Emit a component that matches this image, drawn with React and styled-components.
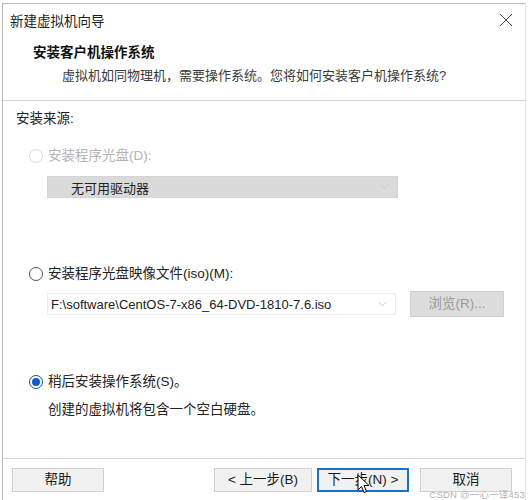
import React from "react";
import styled, { createGlobalStyle } from "styled-components";

const Global = createGlobalStyle`
  html, body { margin: 0; padding: 0; background: #ffffff; }
  body { width: 528px; height: 500px; overflow: hidden; font-family: "Liberation Sans", "Noto Sans CJK SC", sans-serif; }
  #root { height: 500px; }
`;

const Window = styled.div`
  position: relative;
  box-sizing: border-box;
  margin: 3px 2px 0 2px;
  height: 497px;
  border-top: 1px solid #b9b9b9;
  border-left: 1px solid #b9b9b9;
  border-right: 1px solid #e4e4e4;
  background: #fff;
  display: flex;
  flex-direction: column;
  color: #1a1a1a;
`;

const TitleBar = styled.div`
  height: 32px;
  display: flex;
  align-items: center;
  justify-content: space-between;
  padding: 0 12px 0 7px;
  font-size: 13.5px;
  color: #1c1c1c;
`;

const CloseIcon = styled.svg`
  width: 14px;
  height: 14px;
`;

const Header = styled.div`
  height: 65px;
  box-sizing: border-box;
  padding: 8px 0 0 30px;
  border-bottom: 1px solid #d5d5d5;
`;

const HeaderTitle = styled.div`
  font-size: 13.5px;
  font-weight: 700;
  line-height: 18px;
  color: #111;
`;

const HeaderSub = styled.div`
  margin: 5px 0 0 29px;
  font-size: 13px;
  line-height: 18px;
  color: #3a3a3a;
`;

const Body = styled.div`
  flex: 1;
  padding: 9px 0 0 13px;
  display: flex;
  flex-direction: column;
`;

const Label = styled.div`
  font-size: 13.5px;
  line-height: 18px;
  color: ${(p) => (p.$disabled ? "#b4b4b4" : "#222")};
  margin-top: ${(p) => p.$mt || 0}px;
  margin-left: ${(p) => p.$ml || 0}px;
`;

const RadioRow = styled.div`
  display: flex;
  align-items: center;
  gap: 5px;
  margin-top: ${(p) => p.$mt || 0}px;
  margin-left: 13px;
  font-size: 13.5px;
  line-height: 18px;
  color: ${(p) => (p.$disabled ? "#b4b4b4" : "#222")};
`;

const Radio = styled.span`
  box-sizing: border-box;
  width: 14px;
  height: 14px;
  border-radius: 50%;
  border: 1px solid ${(p) => (p.$disabled ? "#dedede" : p.$checked ? "#1d4f91" : "#555")};
  display: flex;
  align-items: center;
  justify-content: center;
  background: #fff;
  &::after {
    content: "";
    display: ${(p) => (p.$checked ? "block" : "none")};
    width: 8px;
    height: 8px;
    border-radius: 50%;
    background: #0a5fd0;
  }
`;

const FieldRow = styled.div`
  display: flex;
  align-items: center;
  gap: 14px;
  margin-top: ${(p) => p.$mt || 0}px;
  margin-left: 31px;
`;

const Select = styled.div`
  box-sizing: border-box;
  width: ${(p) => p.$w}px;
  height: 22px;
  display: flex;
  align-items: center;
  justify-content: space-between;
  padding: 0 8px 0 ${(p) => p.$pl || 3}px;
  font-size: 13px;
  background: ${(p) => (p.$disabled ? "#dadada" : "#fff")};
  border: 1px solid ${(p) => (p.$disabled ? "#d4d4d4" : "#ececec")};
  color: #222;
`;

const Chevron = styled.svg`
  width: 9px;
  height: 6px;
`;

const Button = styled.div`
  box-sizing: border-box;
  width: ${(p) => p.$w || 92}px;
  height: ${(p) => p.$h || 24}px;
  display: flex;
  align-items: center;
  justify-content: center;
  font-size: 13.5px;
  line-height: 14px;
  background: ${(p) => (p.$disabled ? "#dcdcdc" : "#f1f1f1")};
  border: ${(p) => (p.$focus ? "2px solid #1870c8" : "1px solid #cfcfcf")};
  color: ${(p) => (p.$disabled ? "#9a9a9a" : "#1a1a1a")};
  margin-left: ${(p) => p.$ml || 0}px;
`;

const Footer = styled.div`
  box-sizing: border-box;
  height: 42px;
  flex: none;
  border-top: 1px solid #d8d8d8;
  display: flex;
  align-items: flex-start;
  padding: 9px 0 0 9px;
`;

const Watermark = styled.div`
  position: absolute;
  right: 0px;
  bottom: 0px;
  font-size: 9.5px;
  line-height: 10px;
  color: rgba(150, 150, 150, 0.75);
  letter-spacing: 0.2px;
`;

const Cursor = styled.svg`
  position: absolute;
  left: 354px;
  top: 470px;
  width: 13px;
  height: 20px;
`;

const ChevronIcon = () => (
  <Chevron viewBox="0 0 9 6">
    <path d="M0.5 0.8 L4.5 4.8 L8.5 0.8" fill="none" stroke="#c8c8c8" strokeWidth="1" />
  </Chevron>
);

export default function App() {
  return (
    <>
      <Global />
      <Window>
        <TitleBar>
          <span>新建虚拟机向导</span>
          <CloseIcon viewBox="0 0 14 14">
            <path d="M1 1 L13 13 M13 1 L1 13" stroke="#444" strokeWidth="1" />
          </CloseIcon>
        </TitleBar>
        <Header>
          <HeaderTitle>安装客户机操作系统</HeaderTitle>
          <HeaderSub>虚拟机如同物理机，需要操作系统。您将如何安装客户机操作系统?</HeaderSub>
        </Header>
        <Body>
          <Label>安装来源:</Label>
          <RadioRow $disabled $mt={19}>
            <Radio $disabled />
            <span>安装程序光盘(D):</span>
          </RadioRow>
          <FieldRow $mt={11}>
            <Select $w={351} $pl={23} $disabled>
              <span>无可用驱动器</span>
              <ChevronIcon />
            </Select>
          </FieldRow>
          <RadioRow $mt={67}>
            <Radio />
            <span>安装程序光盘映像文件(iso)(M):</span>
          </RadioRow>
          <FieldRow $mt={8}>
            <Select $w={349}>
              <span>F:\software\CentOS-7-x86_64-DVD-1810-7.6.iso</span>
              <ChevronIcon />
            </Select>
            <Button $disabled $w={94} $h={26}>浏览(R)...</Button>
          </FieldRow>
          <RadioRow $mt={56}>
            <Radio $checked />
            <span>稍后安装操作系统(S)。</span>
          </RadioRow>
          <Label $mt={10} $ml={32}>创建的虚拟机将包含一个空白硬盘。</Label>
        </Body>
        <Footer>
          <Button>帮助</Button>
          <Button $w={98} $ml={110}>&lt; 上一步(B)</Button>
          <Button $focus $ml={5}>下一步(N) &gt;</Button>
          <Button $ml={11}>取消</Button>
        </Footer>
        <Watermark>CSDN @一心一译453</Watermark>
        <Cursor viewBox="0 0 13 20">
          <path d="M1 1 L1 16 L4.5 12.5 L7 18.5 L9.5 17.5 L7 11.5 L12 11.5 Z" fill="#fff" stroke="#000" strokeWidth="1" strokeLinejoin="round" />
        </Cursor>
      </Window>
    </>
  );
}
